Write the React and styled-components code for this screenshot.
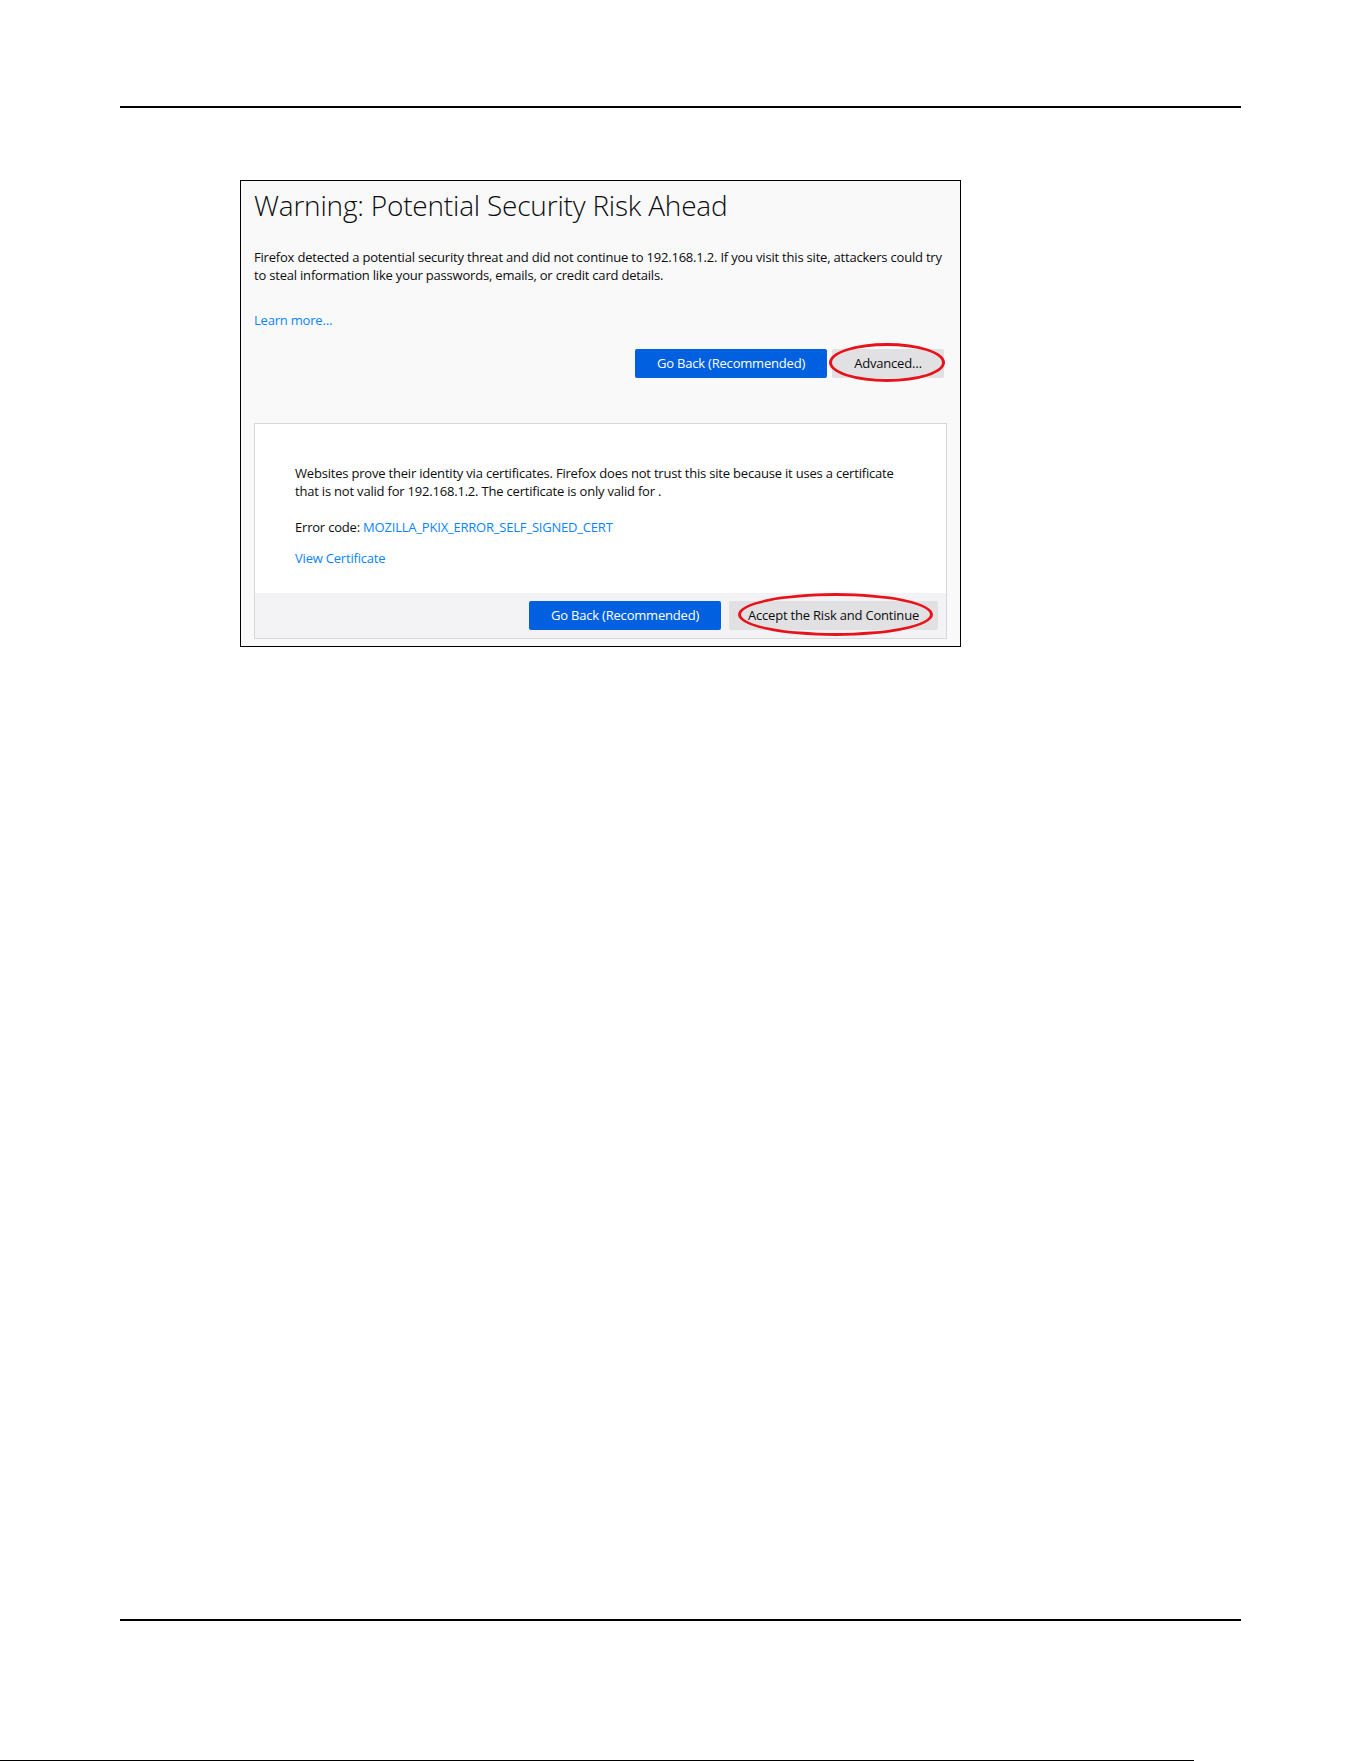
import React from "react";
import styled, { createGlobalStyle } from "styled-components";

const GlobalStyle = createGlobalStyle`
  body {
    margin: 0;
    background: #ffffff;
  }
`;

const Page = styled.div`
  width: 1361px;
  height: 1761px;
  overflow: hidden;
  display: flex;
  flex-direction: column;
  background: #ffffff;
`;

const Rule = styled.div`
  margin-top: ${(p) => p.$top}px;
  margin-left: ${(p) => p.$left}px;
  width: ${(p) => p.$width}px;
  height: ${(p) => p.$thick}px;
  background: #000000;
  flex-shrink: 0;
`;

const Dialog = styled.div`
  margin: 72px 0 0 240px;
  width: 721px;
  height: 467px;
  box-sizing: border-box;
  border: 1px solid #000000;
  background: #f9f9fa;
  padding: 0 16px 0 13px;
  display: flex;
  flex-direction: column;
  font-family: "Open Sans", "Noto Sans", sans-serif;
  color: #0c0c0d;
  flex-shrink: 0;
`;

const Title = styled.h1`
  margin: 7px 0 0;
  font-size: 28px;
  font-weight: 300;
  line-height: 34px;
  letter-spacing: -0.2px;
`;

const Text = styled.p`
  margin: ${(p) => p.$top || 0}px 0 0;
  font-size: 13px;
  line-height: 18px;
  letter-spacing: -0.2px;
  white-space: nowrap;
`;

const Link = styled.a`
  color: #0a84ff;
  text-decoration: none;
  cursor: pointer;
`;

const Actions = styled.div`
  display: flex;
  justify-content: flex-end;
  gap: ${(p) => p.$gap}px;
  margin-top: ${(p) => p.$top || 0}px;
  padding: ${(p) => p.$pad || "0"};
`;

const Button = styled.button`
  width: ${(p) => p.$w}px;
  height: 29px;
  padding: 0;
  border: none;
  border-radius: 2px;
  font-family: "Open Sans", "Noto Sans", sans-serif;
  font-size: 13px;
  letter-spacing: -0.2px;
  background: ${(p) => (p.$primary ? "#0060df" : "#e1e1e3")};
  color: ${(p) => (p.$primary ? "#ffffff" : "#0c0c0d")};
  cursor: pointer;
`;

const Marked = styled.div`
  position: relative;
  display: flex;
`;

/* red hand-drawn ring round the button to press */
const Ring = styled.span`
  position: absolute;
  top: ${(p) => p.$t}px;
  left: ${(p) => p.$l}px;
  right: ${(p) => p.$r}px;
  bottom: ${(p) => p.$b}px;
  border: 3px solid #e8121a;
  border-radius: 50%;
  pointer-events: none;
`;

const Panel = styled.div`
  margin-top: 45px;
  width: 693px;
  height: 216px;
  box-sizing: border-box;
  border: 1px solid #d7d7db;
  background: #ffffff;
  display: flex;
  flex-direction: column;
`;

const PanelBody = styled.div`
  padding: 40px 40px 0;
`;

const PanelFooter = styled.div`
  margin-top: auto;
  height: 45px;
  box-sizing: border-box;
  background: #f3f3f5;
`;

export default function App() {
  return (
    <Page>
      <GlobalStyle />
      <Rule $top={106} $left={120} $width={1121} $thick={1.5} />

      <Dialog>
        <Title>Warning: Potential Security Risk Ahead</Title>
        <Text $top={26}>
          Firefox detected a potential security threat and did not continue to 192.168.1.2. If you visit this site, attackers could try
          <br />
          to steal information like your passwords, emails, or credit card details.
        </Text>
        <Text $top={27}>
          <Link>Learn more…</Link>
        </Text>

        <Actions $gap={5} $top={20}>
          <Button $primary $w={192}>Go Back (Recommended)</Button>
          <Marked>
            <Button $w={112}>Advanced…</Button>
            <Ring $t={-6} $l={-3} $r={-1} $b={-4} />
          </Marked>
        </Actions>

        <Panel>
          <PanelBody>
            <Text>
              Websites prove their identity via certificates. Firefox does not trust this site because it uses a certificate
              <br />
              that is not valid for 192.168.1.2. The certificate is only valid for .
            </Text>
            <Text $top={18}>
              Error code: <Link>MOZILLA_PKIX_ERROR_SELF_SIGNED_CERT</Link>
            </Text>
            <Text $top={13}>
              <Link>View Certificate</Link>
            </Text>
          </PanelBody>
          <PanelFooter>
            <Actions $gap={8} $pad="8px 8px 0 0">
              <Button $primary $w={192}>Go Back (Recommended)</Button>
              <Marked>
                <Button $w={209}>Accept the Risk and Continue</Button>
                <Ring $t={-8} $l={9} $r={5} $b={-6} />
              </Marked>
            </Actions>
          </PanelFooter>
        </Panel>
      </Dialog>

      <Rule $top={972} $left={120} $width={1121} $thick={2.5} />
      <Rule $top={138.5} $left={0} $width={1194} $thick={1} />
    </Page>
  );
}
